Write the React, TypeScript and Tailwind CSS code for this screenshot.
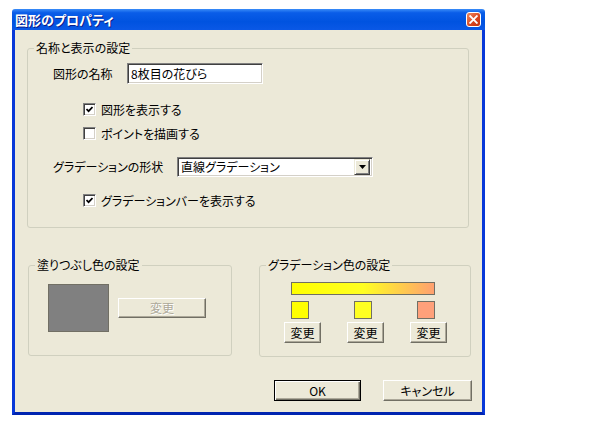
import type { ReactNode } from 'react';

const FONT = "font-['Noto_Sans_CJK_JP','Noto_Sans',sans-serif] [font-feature-settings:'palt']";

function Group({ title, className, children }: { title: string; className?: string; children: ReactNode }) {
  return (
    <fieldset className={`border border-[#d0d0bf] rounded-[3px] ${className ?? ''}`}>
      <legend className="ml-[6px] px-[2px] text-[12px] leading-[14px] text-black">{title}</legend>
      {children}
    </fieldset>
  );
}

function Check({ checked, label, className }: { checked?: boolean; label: string; className?: string }) {
  return (
    <div className={`flex items-center h-[13px] ${className ?? ''}`}>
      <span className="w-[13px] h-[13px] shrink-0 bg-white border border-t-[#808080] border-l-[#808080] border-r-white border-b-white shadow-[inset_1px_1px_0_#404040,inset_-1px_-1px_0_#d4d0c8] flex items-center justify-center">
        {checked && (
          <svg width="7" height="7" viewBox="0 0 7 7">
            <polyline points="0.5,3 2.6,5.2 6.5,1" fill="none" stroke="#000" strokeWidth={1.7} />
          </svg>
        )}
      </span>
      <span className="ml-[5px] text-[12px] leading-[14px] text-black whitespace-nowrap">{label}</span>
    </div>
  );
}

function Btn({ label, w, h = 21, isDefault, disabled }: { label: string; w: number; h?: number; isDefault?: boolean; disabled?: boolean }) {
  const base = isDefault
    ? 'border border-black shadow-[inset_1px_1px_0_#fff,inset_-1px_-1px_0_#716f64,inset_-2px_-2px_0_#aca899]'
    : 'border border-t-white border-l-white border-r-[#716f64] border-b-[#716f64] shadow-[inset_-1px_-1px_0_#aca899]';
  return (
    <div
      className={`flex items-center justify-center bg-[#ece9d8] text-[12px] leading-[14px] ${base} ${
        disabled ? 'text-[#aca899] [text-shadow:1px_1px_0_#fff]' : 'text-black'
      }`}
      style={{ width: w, height: h }}
    >
      {label}
    </div>
  );
}

function Swatch({ color }: { color: string }) {
  return <div className="w-[18px] h-[18px] border border-[#716f64]" style={{ background: color }} />;
}

export default function App() {
  return (
    <div className={`w-[597px] h-[427px] bg-white pt-[9px] pl-[12px] ${FONT}`}>
      <div className="w-[473px] h-[406px] flex flex-col">
        {/* Title bar */}
        <div className="h-[21px] shrink-0 rounded-t-[3px] bg-[linear-gradient(to_bottom,#3a8cf8_0%,#0a5de8_18%,#0053e0_60%,#0a58e6_100%)] flex items-center pl-[3px] pr-[4px]">
          <span className="text-white font-bold text-[13px] leading-[15px] [text-shadow:1px_1px_0_#0a1e8a]">図形のプロパティ</span>
          <div className="ml-auto w-[15px] h-[15px] rounded-[3px] border border-white bg-[linear-gradient(135deg,#f08a60,#d8431d_60%,#c2350f)] flex items-center justify-center">
            <svg width="9" height="9" viewBox="0 0 9 9">
              <path d="M1.2 1.2 L7.8 7.8 M7.8 1.2 L1.2 7.8" stroke="#fff" strokeWidth={1.9} strokeLinecap="square" />
            </svg>
          </div>
        </div>

        {/* Body */}
        <div className="flex-1 bg-[#ece9d8] border-[3px] border-t-0 border-[#0838d8] border-b-[#0024b0] flex flex-col">
          <Group title="名称と表示の設定" className="mt-[11px] ml-[12px] w-[442px] pb-[20px]">
            <div className="mt-[8px] flex items-center h-[21px]">
              <span className="ml-[25px] w-[74px] text-[12px] leading-[14px] text-black">図形の名称</span>
              <div className="w-[136px] h-[21px] bg-white border border-t-[#808080] border-l-[#808080] border-r-white border-b-white shadow-[inset_1px_1px_0_#404040,inset_-1px_-1px_0_#d4d0c8] flex items-center pl-[3px] text-[12px] leading-[14px] text-black">
                8枚目の花びら
              </div>
            </div>
            <Check checked label="図形を表示する" className="mt-[19px] ml-[55px]" />
            <Check label="ポイントを描画する" className="mt-[11px] ml-[55px]" />
            <div className="mt-[17px] flex items-center h-[20px]">
              <span className="ml-[25px] w-[124px] text-[12px] leading-[14px] text-black">グラデーションの形状</span>
              <div className="w-[196px] h-[20px] bg-white border border-t-[#808080] border-l-[#808080] border-r-white border-b-white shadow-[inset_1px_1px_0_#404040,inset_-1px_-1px_0_#d4d0c8] flex items-center pl-[3px] pr-[2px] text-[12px] leading-[14px] text-black">
                <span>直線グラデーション</span>
                <div className="ml-auto w-[16px] h-[16px] bg-[#ece9d8] border border-t-[#ece9d8] border-l-[#ece9d8] border-r-[#404040] border-b-[#404040] shadow-[inset_1px_1px_0_#fff,inset_-1px_-1px_0_#808080] flex items-center justify-center">
                  <svg width="7" height="4" viewBox="0 0 7 4">
                    <path d="M0 0 H7 L3.5 4 Z" fill="#000" />
                  </svg>
                </div>
              </div>
            </div>
            <Check checked label="グラデーションバーを表示する" className="mt-[17px] ml-[55px]" />
          </Group>

          <div className="mt-[30px] ml-[13px] flex items-start gap-[27px]">
            <Group title="塗りつぶし色の設定" className="w-[204px] h-[98px]">
              <div className="mt-[12px] ml-[19px] flex items-center">
                <div className="w-[61px] h-[48px] bg-[#808080] border border-[#716f64]" />
                <div className="ml-[9px]">
                  <Btn label="変更" w={88} h={20} disabled />
                </div>
              </div>
            </Group>

            <Group title="グラデーション色の設定" className="w-[212px] h-[99px]">
              <div className="mt-[10px] ml-[31px] w-[144px] h-[13px] border border-[#716f64] bg-[linear-gradient(to_right,#ffff00_0%,#ffff22_50%,#ffa070_100%)]" />
              <div className="mt-[6px] ml-[24px] flex gap-[26px]">
                {['#ffff00', '#ffff22', '#ffa07a'].map((c, i) => (
                  <div key={i} className="flex flex-col items-start w-[37px]">
                    <div className="ml-[7px]">
                      <Swatch color={c} />
                    </div>
                    <div className="mt-[3px]">
                      <Btn label="変更" w={37} h={21} />
                    </div>
                  </div>
                ))}
              </div>
            </Group>
          </div>

          <div className="mt-[23px] ml-[259px] flex gap-[22px]">
            <Btn label="OK" w={87} h={21} isDefault />
            <Btn label="キャンセル" w={89} h={21} />
          </div>
        </div>
      </div>
    </div>
  );
}
